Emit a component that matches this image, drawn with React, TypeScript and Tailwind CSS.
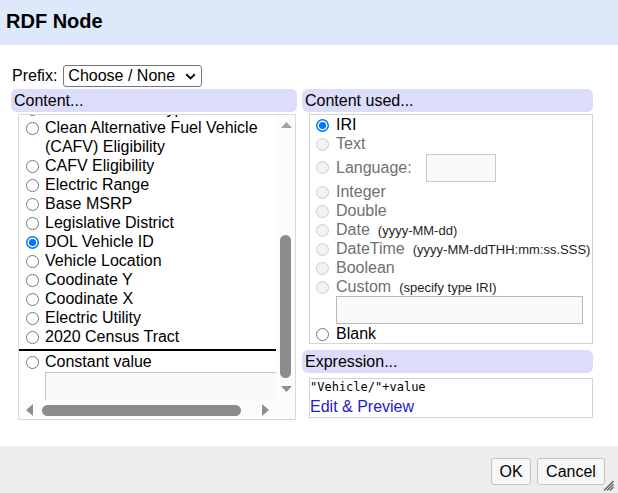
import React from "react";

type RState = "off" | "on" | "dis";

function Radio({ state }: { state: RState }) {
  return (
    <svg width="13" height="13" viewBox="0 0 13 13" className="block shrink-0">
      {state === "on" ? (
        <>
          <circle cx="6.5" cy="6.5" r="5.75" fill="white" stroke="#0075ff" strokeWidth="1.5" />
          <circle cx="6.5" cy="6.5" r="3.6" fill="#0075ff" />
        </>
      ) : state === "dis" ? (
        <circle cx="6.5" cy="6.5" r="6" fill="#f2f2f2" stroke="#cdcdcd" strokeWidth="1" />
      ) : (
        <circle cx="6.5" cy="6.5" r="6" fill="white" stroke="#767676" strokeWidth="1" />
      )}
    </svg>
  );
}

function LeftItem({ label, on = false }: { label: string; on?: boolean }) {
  return (
    <div className="flex items-start leading-[19px]">
      <span className="mt-[4px] ml-[7px] mr-[6px] shrink-0">
        <Radio state={on ? "on" : "off"} />
      </span>
      <span className="whitespace-normal">{label}</span>
    </div>
  );
}

function RightItem({
  label,
  state = "dis",
  hint,
}: {
  label: string;
  state?: RState;
  hint?: string;
}) {
  return (
    <div className="flex items-start h-[19px] leading-[19px] whitespace-nowrap">
      <span className="mt-[4px] ml-[6px] mr-[7px] shrink-0">
        <Radio state={state} />
      </span>
      <span className={state === "dis" ? "text-[#707070]" : "text-black"}>
        {label}
        {hint && <span className="text-[13px] ml-[8px] text-[#1e1e1e]">{hint}</span>}
      </span>
    </div>
  );
}

const leftItems = [
  "Electric Vehicle Type",
  "Clean Alternative Fuel Vehicle (CAFV) Eligibility",
  "CAFV Eligibility",
  "Electric Range",
  "Base MSRP",
  "Legislative District",
  "DOL Vehicle ID",
  "Vehicle Location",
  "Coodinate Y",
  "Coodinate X",
  "Electric Utility",
  "2020 Census Tract",
];

export default function App() {
  return (
    <div className="relative w-[618px] h-[493px] flex flex-col bg-white text-[16px] text-black font-['Liberation_Sans',Arial,sans-serif] overflow-hidden">
      {/* Title bar */}
      <div className="h-[45px] shrink-0 bg-[#dde9fb] flex items-center pl-[6px] pb-[3px]">
        <span className="text-[20px] font-bold leading-none">RDF Node</span>
      </div>

      {/* Body */}
      <div className="flex-1 pt-[20px]">
        <div className="flex items-center h-[22px] pl-[12px]">
          <span className="leading-[22px]">Prefix:</span>
          <div className="ml-[6px] h-[22px] w-[139px] border border-[#767676] rounded-[3px] flex items-center justify-between pl-[4px] pr-[5px] leading-[20px]">
            <span>Choose / None</span>
            <svg width="11" height="7" viewBox="0 0 11 7" className="block">
              <path d="M1.2 1.2 L5.5 5.4 L9.8 1.2" fill="none" stroke="#111" strokeWidth="2" />
            </svg>
          </div>
        </div>

        <div className="flex gap-[5px] pl-[11px] mt-[2px]">
          {/* Left column */}
          <div className="w-[286px]">
            <div className="h-[23px] leading-[23px] rounded-[6px] bg-[#dcdcfb] pl-[3px]">Content...</div>
            <div className="ml-[7px] mt-[2px] w-[278px] h-[306px] border border-[#d9d9d9] grid grid-cols-[257px_19px] grid-rows-[285px_19px]">
              <div className="overflow-hidden">
                <div className="mt-[-16px]">
                  {leftItems.map((l) => (
                    <LeftItem key={l} label={l} on={l === "DOL Vehicle ID"} />
                  ))}
                  <div className="mt-[3px] h-[2px] bg-black w-full" />
                  <div className="mt-[1px]">
                    <LeftItem label="Constant value" />
                  </div>
                  <div className="mt-[1px] pl-[26px] w-[320px]">
                    <div className="h-[30px] w-[280px] border border-[#c4c4c4] bg-[#fafafa]" />
                  </div>
                </div>
              </div>
              {/* vertical scrollbar */}
              <div className="bg-[#fcfcfc] flex flex-col">
                <div className="h-[20px] flex items-center justify-center pl-[1px]">
                  <svg width="11" height="6" viewBox="0 0 11 6" className="block">
                    <polygon points="0,6 5.5,0 11,6" fill="#a3a3a3" />
                  </svg>
                </div>
                <div className="flex-1 flex flex-col">
                  <div className="mt-[100px] ml-[4px] w-[11px] h-[143px] rounded-full bg-[#8b8b8b]" />
                </div>
                <div className="h-[20px] flex items-center justify-center pl-[1px] pb-[2px]">
                  <svg width="11" height="6" viewBox="0 0 11 6" className="block">
                    <polygon points="0,0 11,0 5.5,6" fill="#8f8f8f" />
                  </svg>
                </div>
              </div>
              {/* horizontal scrollbar */}
              <div className="bg-[#fcfcfc] flex items-center">
                <div className="w-[19px] h-full flex items-center justify-center pl-[1px]">
                  <svg width="7" height="12" viewBox="0 0 7 12" className="block">
                    <polygon points="7,0 7,12 0,6" fill="#8f8f8f" />
                  </svg>
                </div>
                <div className="ml-[4px] w-[199px] h-[11px] rounded-full bg-[#8b8b8b] mt-[1px]" />
                <div className="ml-auto w-[19px] h-full flex items-center justify-center pr-[2px]">
                  <svg width="7" height="12" viewBox="0 0 7 12" className="block">
                    <polygon points="0,0 7,6 0,12" fill="#8f8f8f" />
                  </svg>
                </div>
              </div>
              <div className="bg-[#fcfcfc]" />
            </div>
          </div>

          {/* Right column */}
          <div className="w-[291px]">
            <div className="h-[23px] leading-[23px] rounded-[6px] bg-[#dcdcfb] pl-[3px]">Content used...</div>
            <div className="ml-[7px] mt-[2px] w-[284px] border border-[#d4d4d4]">
              <RightItem label="IRI" state="on" />
              <RightItem label="Text" />
              <div className="flex items-center h-[29px] whitespace-nowrap">
                <span className="ml-[6px] mr-[7px] shrink-0">
                  <Radio state="dis" />
                </span>
                <span className="text-[#707070] leading-[19px]">Language:</span>
                <div className="ml-[14px] w-[70px] h-[28px] border border-[#c9c9c9] bg-[#fafafa]" />
              </div>
              <RightItem label="Integer" />
              <RightItem label="Double" />
              <RightItem label="Date" hint="(yyyy-MM-dd)" />
              <RightItem label="DateTime" hint="(yyyy-MM-ddTHH:mm:ss.SSS)" />
              <RightItem label="Boolean" />
              <RightItem label="Custom" hint="(specify type IRI)" />
              <div className="h-[28px] pl-[26px]">
                <div className="w-[247px] h-[28px] border border-[#b8b8b8] bg-[#fafafa]" />
              </div>
              <RightItem label="Blank" state="off" />
            </div>

            <div className="mt-[6px] h-[23px] leading-[23px] rounded-[6px] bg-[#dcdcfb] pl-[3px]">Expression...</div>
            <div className="ml-[7px] mt-[5px] w-[284px] h-[40px] border border-[#d4d4d4]">
              <div className="h-[18px] leading-[16px] text-[12px] font-['DejaVu_Sans_Mono',monospace] whitespace-nowrap">
                "Vehicle/"+value
              </div>
              <div className="leading-[19px] text-[#2020cc]">Edit &amp; Preview</div>
            </div>
          </div>
        </div>
      </div>

      {/* Footer */}
      <div className="h-[47px] shrink-0 bg-[#ededed] flex justify-end items-start pt-[12px] pr-[13px] gap-[6px]">
        <div className="w-[40px] h-[27px] border border-[#c3c3c3] rounded-[3px] bg-[#f7f7f7] flex items-center justify-center leading-none">
          OK
        </div>
        <div className="w-[68px] h-[27px] border border-[#c3c3c3] rounded-[3px] bg-[#f7f7f7] flex items-center justify-center leading-none">
          Cancel
        </div>
      </div>

      {/* resize grip */}
      <svg width="11" height="11" viewBox="0 0 11 11" className="absolute right-[4px] bottom-[2px] block">
        <line x1="10.5" y1="1" x2="1" y2="10.5" stroke="#5a5a5a" strokeWidth="1.2" />
        <line x1="10.5" y1="4" x2="4" y2="10.5" stroke="#5a5a5a" strokeWidth="1.2" />
        <line x1="10.5" y1="7" x2="7" y2="10.5" stroke="#5a5a5a" strokeWidth="1.2" />
      </svg>
    </div>
  );
}
